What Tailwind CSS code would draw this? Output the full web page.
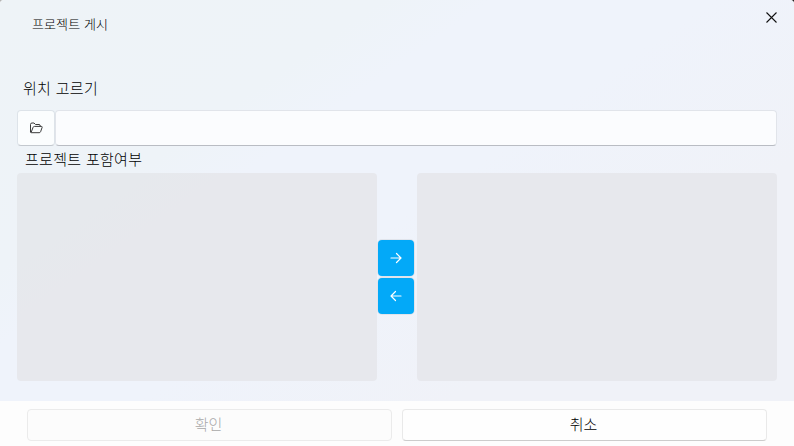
<!DOCTYPE html>
<html lang="ko">
<head>
<meta charset="utf-8">
<title>프로젝트 게시</title>
<script src="https://cdn.jsdelivr.net/npm/@tailwindcss/browser@4"></script>
</head>
<body class="bg-linear-to-r from-[#b5b5b5] to-[#222] overflow-hidden font-['Noto_Sans_CJK_KR',sans-serif] font-light text-black">
<div class="flex h-[446px] w-[794px] flex-col overflow-hidden rounded-t-[4px] bg-[#fdfdfd]">
  <main class="flex h-[401px] flex-col bg-linear-[145deg,#eef3f7_0%,#eef3f8_28%,#eff3fb_36%,#eff3fb_52%,#f0f2f8_75%] px-[17px]">
    <header class="flex h-[76px] items-start justify-between pl-[15px]">
      <h1 class="mt-[14px] text-[13px] leading-[20px] tracking-[0.1px]">프로젝트 게시</h1>
      <button class="mt-[12px]" aria-label="닫기">
        <svg class="block" width="11" height="11" viewBox="0 0 11 11" fill="none" stroke="#111" stroke-width="1.1"><path d="M.5.5l10 10M10.5.5L.5 10.5"/></svg>
      </button>
    </header>
    <h2 class="h-[34px] pl-[6px] text-[15px] leading-[24px] tracking-[0.3px]">위치 고르기</h2>
    <div class="flex h-[36px]">
      <button class="flex w-[38px] items-center justify-center rounded-[4px] border border-[#dde3e9] border-b-[#c3c8ce] bg-[#fbfdfe]" aria-label="폴더">
        <svg width="14" height="12" viewBox="0 0 14 12" fill="none" stroke="#3a3a3a" stroke-width="1" stroke-linejoin="round"><path d="M1.5 10V2.5Q1.5 1 3 1H5L6.5 2.5H10Q11.3 2.5 11.3 4.2M2 10.7L4 5.5Q4.4 4.4 5.5 4.4H12.3Q13.5 4.4 13.1 5.5L11.6 9.7Q11.2 10.7 10.2 10.7H2.5Q1.5 10.7 1.5 9.7"/></svg>
      </button>
      <input class="min-w-0 flex-1 rounded-[4px] border border-[#e1e4ea] border-b-[#b9bcc3] bg-[#fbfcfe] px-3 text-sm outline-none" aria-label="위치">
    </div>
    <h2 class="h-[27px] pl-[8px] text-[15px] leading-[26px] tracking-[0.3px]">프로젝트 포함여부</h2>
    <div class="flex h-[208px]">
      <section class="w-[360px] rounded-[4px] bg-linear-[145deg,#e6e9ed_0%,#e6e9ed_20%,#e7e8ed_32%]"></section>
      <div class="flex w-[40px] flex-col gap-[2px] pl-px pt-[67px]">
        <button class="flex h-[36px] w-[36px] items-center justify-center rounded-[4px] bg-[#03a9f8] shadow-[0_0_0_1px_rgba(0,0,0,0.06)]" aria-label="추가">
          <svg width="12" height="12" viewBox="0 0 12 12" fill="none" stroke="#fff" stroke-width="1.2" stroke-linecap="round" stroke-linejoin="round"><path d="M1 6H10.8M6.500 1.500L11 6L6.500 10.500"/></svg>
        </button>
        <button class="flex h-[36px] w-[36px] items-center justify-center rounded-[4px] bg-[#03a9f8] shadow-[0_0_0_1px_rgba(0,0,0,0.06)]" aria-label="제거">
          <svg width="12" height="12" viewBox="0 0 12 12" fill="none" stroke="#fff" stroke-width="1.2" stroke-linecap="round" stroke-linejoin="round"><path d="M11 6H1.200M5.500 1.500L1 6L5.500 10.500"/></svg>
        </button>
      </div>
      <section class="w-[360px] rounded-[4px] bg-[#e7e8ed]"></section>
    </div>
  </main>
  <footer class="flex h-[45px] gap-[10px] bg-[#fdfdfd] px-[27px] pt-[8px]">
    <button class="h-[32px] flex-1 rounded-[4px] border border-[#ebebeb] bg-[#fcfcfc] pr-[2px] pb-[2px] text-[15px] leading-[28px] text-[#a8a8a8]" disabled>확인</button>
    <button class="h-[32px] flex-1 rounded-[4px] border border-[#e9e9e9] border-b-[#cccccc] bg-[#fefefe] pr-[2px] pb-[2px] text-[15px] leading-[28px]">취소</button>
  </footer>
</div>
</body>
</html>
